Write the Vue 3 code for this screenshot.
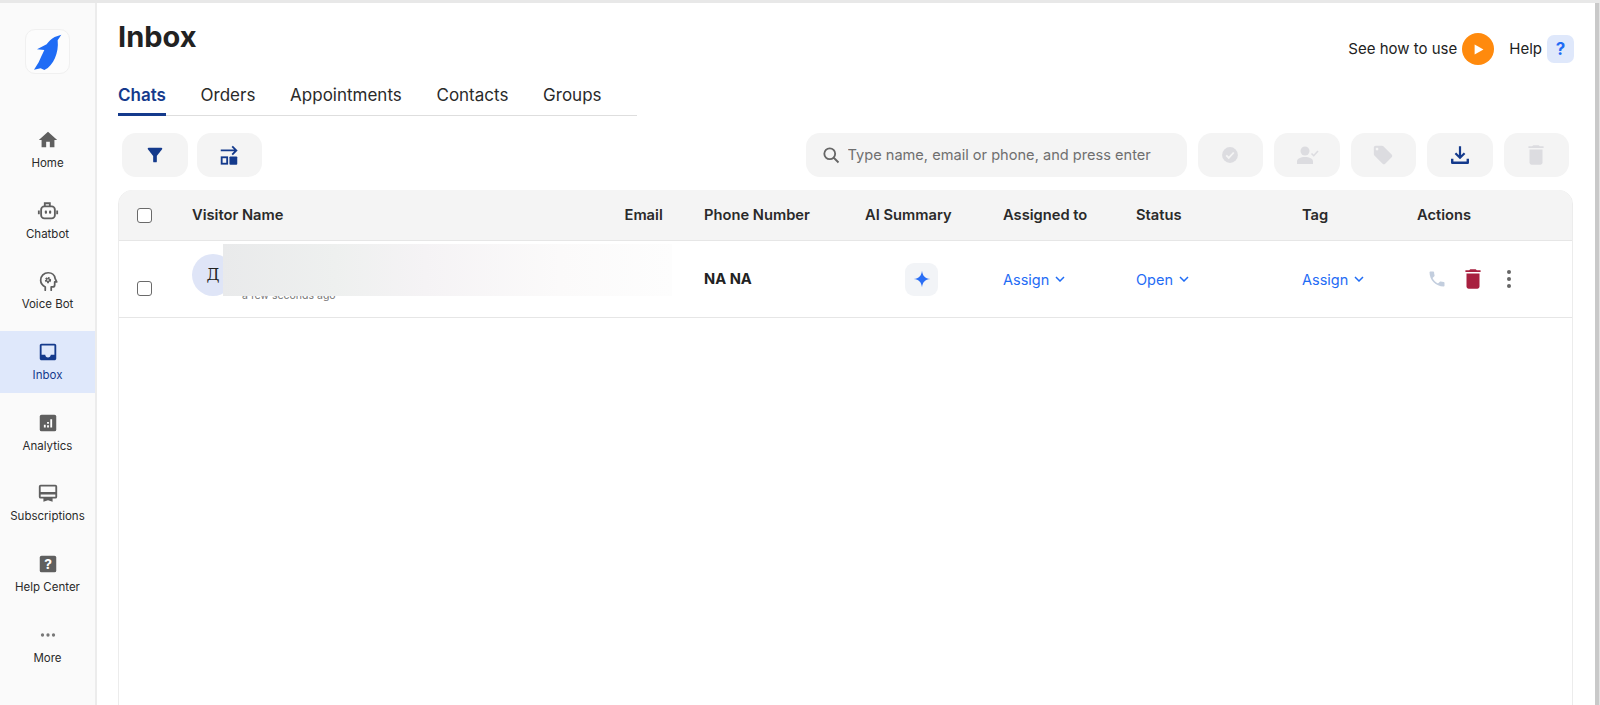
<script setup>
const navItems = [
  { label: 'Home', svg: '<path fill="#5f5f5f" d="M10 20v-6h4v6h5v-8h3L12 3 2 12h3v8z"/>' },
  { label: 'Chatbot', svg: '<g fill="none" stroke="#5f5f5f" stroke-width="2"><rect x="4.500" y="7" width="15" height="13" rx="3.500"/><path d="M8.500 7V3.500h5.500V7"/><path d="M2 11.500v4M22 11.500v4"/></g><rect x="8.500" y="11.500" width="2.400" height="3.400" rx="1" fill="#5f5f5f"/><rect x="13.100" y="11.500" width="2.400" height="3.400" rx="1" fill="#5f5f5f"/>' },
  { label: 'Voice Bot', svg: '<path fill="none" stroke="#5f5f5f" stroke-width="1.900" stroke-linecap="round" stroke-linejoin="round" d="M9 22v-3.400C6 17 4 14.400 4 11.300 4 6.700 7.600 3 12.200 3c4 0 7 2.600 7.600 6.300l1.700 3.700h-2.200v3.300c0 1.200-1 2.200-2.200 2.200H15.500V22"/><circle cx="12" cy="11" r="2.200" fill="none" stroke="#5f5f5f" stroke-width="2.400" stroke-dasharray="1.600 .7"/><circle cx="12" cy="11" r="1.700" fill="none" stroke="#5f5f5f" stroke-width="1.200"/>' },
  { label: 'Inbox', active: true, svg: '<path fill="#143a8c" d="M19 3H5c-1.100 0-2 .9-2 2v14c0 1.100.9 2 2 2h14c1.100 0 2-.9 2-2V5c0-1.100-.9-2-2-2zm0 12h-4c0 1.660-1.350 3-3 3s-3-1.340-3-3H5V5h14v10z"/>' },
  { label: 'Analytics', svg: '<rect x="3" y="3" width="18" height="18" rx="2" fill="#5f5f5f"/><path fill="#fff" d="M7.500 14h2v3h-2zM11 11h2v1.800h-2zM11 14.500h2V17h-2zM14.500 8h2v9h-2z"/>' },
  { label: 'Subscriptions', svg: '<path fill="#5f5f5f" d="M4 3h16a2 2 0 0 1 2 2v11a2 2 0 0 1-2 2h-3v3.500l-5-1.500-5 1.500V18H4a2 2 0 0 1-2-2V5a2 2 0 0 1 2-2zm0 2v6h16V5H4zm0 8.500V16h16v-2.500H4z"/>' },
  { label: 'Help Center', svg: '<rect x="3" y="3" width="18" height="18" rx="2" fill="#5f5f5f"/><text x="12" y="17.500" text-anchor="middle" font-size="15" font-weight="700" font-family="Inter, sans-serif" fill="#fff">?</text>' },
  { label: 'More', svg: '<g fill="#777"><circle cx="6" cy="12" r="1.800"/><circle cx="12" cy="12" r="1.800"/><circle cx="18" cy="12" r="1.800"/></g>' }
]

const tabs = ['Chats', 'Orders', 'Appointments', 'Contacts', 'Groups']
const columns = ['Visitor Name', 'Email', 'Phone Number', 'AI Summary', 'Assigned to', 'Status', 'Tag', 'Actions']
</script>

<template>
  <div class="app">
    <aside class="sidebar">
      <div class="logo">
        <svg viewBox="0 0 132 132" width="44" height="44">
          <path fill="#1f6cf5" d="M106 14 L86 21 C76 26 68 34 62 43 L33 58 L55 60 C48 74 43 86 38 97 L24 119 L44 115 L55 120 C70 113 80 100 87 84 C94 68 97 50 95 31 Z" />
        </svg>
      </div>
      <nav class="nav">
        <a v-for="item in navItems" :key="item.label" class="nav-item" :class="{ active: item.active }">
          <svg viewBox="0 0 24 24" width="22" height="22" v-html="item.svg"></svg>
          <span>{{ item.label }}</span>
        </a>
      </nav>
    </aside>

    <main class="main">
      <header class="page-head">
        <h1>Inbox</h1>
        <div class="head-links">
          <span class="head-text">See how to use</span>
          <span class="play">
            <svg viewBox="0 0 10 10" width="11" height="11"><path fill="#fff" d="M1.500 .5 9.500 5l-8 4.500z" /></svg>
          </span>
          <span class="head-text help-label">Help</span>
          <span class="help-box">?</span>
        </div>
      </header>

      <div class="tabs">
        <span v-for="(tab, i) in tabs" :key="tab" class="tab" :class="{ active: i === 0 }">{{ tab }}</span>
      </div>

      <div class="toolbar">
        <div class="tool-group left">
          <button class="tool-btn">
            <svg viewBox="0 0 24 24" width="22" height="22"><path fill="#143a8c" d="M4.250 5.610C6.270 8.200 10 13 10 13v6c0 .55.45 1 1 1h2c.55 0 1-.45 1-1v-6s3.720-4.800 5.740-7.390C20.250 4.950 19.780 4 18.950 4H5.040c-.83 0-1.300.95-.79 1.610z" /></svg>
          </button>
          <button class="tool-btn">
            <svg viewBox="0 0 24 24" width="22" height="22">
              <path fill="none" stroke="#143a8c" stroke-width="2" d="M3 7h16M15.500 2.500 20 7l-4.500 4.500" />
              <rect x="4" y="14.500" width="6" height="7" fill="none" stroke="#143a8c" stroke-width="2" />
              <rect x="12.500" y="13.500" width="8.500" height="9" rx="1" fill="#143a8c" />
            </svg>
          </button>
        </div>

        <div class="tool-group">
          <label class="search">
            <svg viewBox="0 0 24 24" width="20" height="20"><path fill="none" stroke="#666" stroke-width="2.200" d="M10.500 4a6.500 6.500 0 1 0 0 13 6.500 6.500 0 0 0 0-13zM15.300 15.300 21 21" /></svg>
            <input type="text" placeholder="Type name, email or phone, and press enter" />
          </label>

          <button class="tool-btn">
            <svg viewBox="0 0 24 24" width="20" height="20"><circle cx="12" cy="12" r="9.500" fill="#dcdce0" /><path fill="none" stroke="#f4f4f4" stroke-width="2.200" d="m7.500 12.500 3 3 6-6.500" /></svg>
          </button>
          <button class="tool-btn">
            <svg viewBox="0 0 24 24" width="24" height="24"><g fill="#dcdce0"><circle cx="10" cy="8" r="4.500" /><path d="M2 21v-2.500c0-3 3.500-4.500 8-4.500s8 1.500 8 4.500V21z" /></g><path fill="none" stroke="#dcdce0" stroke-width="1.600" d="m16.500 10.500 2.200 2.200 4.300-4.700" /></svg>
          </button>
          <button class="tool-btn">
            <svg viewBox="0 0 24 24" width="22" height="22"><path fill="#dcdce0" d="M21.410 11.580l-9-9C12.050 2.220 11.550 2 11 2H4c-1.100 0-2 .9-2 2v7c0 .55.22 1.050.59 1.420l9 9c.36.36.86.58 1.410.58.55 0 1.050-.22 1.410-.59l7-7c.37-.36.59-.86.59-1.410 0-.55-.23-1.060-.59-1.420zM5.500 7C4.670 7 4 6.330 4 5.500S4.670 4 5.500 4 7 4.670 7 5.500 6.330 7 5.500 7z" /></svg>
          </button>
          <button class="tool-btn">
            <svg viewBox="0 0 24 24" width="22" height="22"><path fill="none" stroke="#143a8c" stroke-width="2.400" d="M12 2.500v12M7 10l5 5 5-5" /><path fill="none" stroke="#143a8c" stroke-width="2.600" stroke-linejoin="round" d="M3.500 16v4.500h17V16" /></svg>
          </button>
          <button class="tool-btn">
            <svg viewBox="0 0 24 24" width="26" height="26"><path fill="#dcdce0" d="M6 19c0 1.100.9 2 2 2h8c1.100 0 2-.9 2-2V7H6v12zM19 4h-3.500l-1-1h-5l-1 1H5v1.500h14V4z" /></svg>
          </button>
        </div>
      </div>

      <section class="table">
        <div class="cols table-head">
          <span class="check"></span>
          <span v-for="col in columns" :key="col">{{ col }}</span>
        </div>
        <div class="cols table-row">
          <span class="check row-check"></span>
          <div class="visitor">
            <span class="avatar">Д</span>
            <span class="time">a few seconds ago</span>
          </div>
          <span></span>
          <span class="phone">NA NA</span>
          <span class="ai-btn">
            <svg viewBox="0 0 24 24" width="18" height="18"><path fill="#2a6ef5" d="M12 1c.8 6.800 4 10.200 11 11-7 .8-10.200 4.200-11 11-.8-6.800-4-10.200-11-11 7-.8 10.200-4.200 11-11z" /></svg>
          </span>
          <a class="link">Assign <svg class="chev" viewBox="0 0 10 6"><path d="M1 1l4 4 4-4" /></svg></a>
          <a class="link">Open <svg class="chev" viewBox="0 0 10 6"><path d="M1 1l4 4 4-4" /></svg></a>
          <a class="link">Assign <svg class="chev" viewBox="0 0 10 6"><path d="M1 1l4 4 4-4" /></svg></a>
          <div class="actions">
            <svg viewBox="0 0 24 24" width="20" height="20"><path fill="#c3cede" d="M6.620 10.790c1.440 2.830 3.760 5.140 6.590 6.590l2.200-2.200c.27-.27.67-.36 1.020-.24 1.120.37 2.330.57 3.570.57.55 0 1 .45 1 1V20c0 .55-.45 1-1 1-9.390 0-17-7.610-17-17 0-.55.45-1 1-1h3.500c.55 0 1 .45 1 1 0 1.250.2 2.450.57 3.570.11.35.03.74-.25 1.020l-2.200 2.200z" /></svg>
            <svg class="trash" viewBox="0 0 24 24" width="26" height="26"><path fill="#a8203f" d="M6 19c0 1.100.9 2 2 2h8c1.100 0 2-.9 2-2V7H6v12zM19 4h-3.500l-1-1h-5l-1 1H5v1.500h14V4z" /></svg>
            <svg class="kebab" viewBox="0 0 6 20" width="6" height="20"><g fill="#666"><circle cx="3" cy="3" r="2" /><circle cx="3" cy="10" r="2" /><circle cx="3" cy="17" r="2" /></g></svg>
          </div>
          <div class="blur-mask"></div>
        </div>
      </section>
    </main>

    <div class="scrollbar"></div>
  </div>
</template>

<style>
html, body {
  margin: 0;
  background: #fff;
  overflow: hidden;
}
</style>

<style scoped>
.app {
  display: flex;
  height: 705px;
  box-sizing: border-box;
  border-top: 3px solid #e8e8e8;
  font-family: Inter, "Liberation Sans", sans-serif;
  color: #222;
  overflow: hidden;
}

.sidebar {
  flex: 0 0 95px;
  background: #fafafa;
  border-right: 2px solid #ececec;
  padding-top: 26px;
}

.logo {
  width: 45px;
  height: 45px;
  margin: 0 0 45px 25px;
  border: 1px solid #f0f0f0;
  border-radius: 10px;
  background: #fcfcfc;
  box-sizing: border-box;
  display: flex;
  align-items: center;
  justify-content: center;
}

.logo svg {
  flex: none;
}

.nav {
  display: flex;
  flex-direction: column;
  gap: 8.700px;
}

.nav-item {
  height: 62px;
  padding-top: 10px;
  box-sizing: border-box;
  display: flex;
  flex-direction: column;
  align-items: center;
  gap: 4px;
  font-size: 11.500px;
  line-height: 16px;
  color: #2a2a2a;
}

.nav-item.active {
  background: #dfe8fb;
  color: #143a8c;
}

.main {
  flex: 1;
  min-width: 0;
  padding: 14px 22px 0 21px;
}

.page-head {
  display: flex;
  justify-content: space-between;
  margin-right: -1px;
}

h1 {
  margin: 0;
  font-size: 29px;
  line-height: 40px;
  font-weight: 700;
  color: #222;
}

.head-links {
  display: flex;
  align-items: center;
  height: 32px;
  margin-top: 16px;
  font-size: 15px;
}

.head-text {
  margin-bottom: 2px;
}

.play {
  width: 32px;
  height: 32px;
  margin-left: 5px;
  border-radius: 50%;
  background: #ff8a0d;
  display: flex;
  align-items: center;
  justify-content: center;
}

.help-label {
  margin-left: 15px;
}

.help-box {
  width: 27px;
  height: 28px;
  margin-left: 5px;
  border-radius: 7px;
  background: #dfe8fb;
  color: #1f6cf5;
  font-size: 17px;
  font-weight: 700;
  text-align: center;
  line-height: 28px;
}

.tabs {
  display: flex;
  gap: 34.700px;
  width: 519px;
  height: 39px;
  margin-top: 12px;
  border-bottom: 1px solid #dedede;
  box-sizing: border-box;
}

.tab {
  height: 39px;
  box-sizing: border-box;
  font-size: 17px;
  line-height: 36px;
  color: #2a2a2a;
}

.tab.active {
  color: #143a8c;
  font-weight: 600;
  border-bottom: 3px solid #143a8c;
}

.toolbar {
  display: flex;
  justify-content: space-between;
  margin-top: 17px;
  padding: 0 4px;
}

.tool-group {
  display: flex;
  gap: 11px;
}

.tool-group.left {
  gap: 9px;
}

.tool-btn {
  flex: 0 0 65.500px;
  height: 44px;
  padding: 0;
  border: none;
  border-radius: 14px;
  background: #f4f4f4;
  display: flex;
  align-items: center;
  justify-content: center;
}

.search {
  flex: 0 0 381px;
  height: 44px;
  padding-left: 15px;
  box-sizing: border-box;
  border-radius: 14px;
  background: #f4f4f4;
  display: flex;
  align-items: center;
  gap: 7px;
}

.search input {
  flex: 1;
  min-width: 0;
  border: none;
  outline: none;
  background: none;
  padding: 0;
  font: 14.600px Inter, "Liberation Sans", sans-serif;
}

.search input::placeholder {
  color: #6f6f6f;
  opacity: 1;
}

.table {
  height: 600px;
  margin-top: 13px;
  border: 1px solid #ececec;
  border-radius: 14px 14px 0 0;
  box-sizing: border-box;
}

.cols {
  display: grid;
  grid-template-columns: 55px 432.500px 79.500px 161px 138px 133px 166px 115px 1fr;
  align-items: center;
  padding-left: 18px;
  border-bottom: 1px solid #e6e6e6;
  box-sizing: border-box;
}

.table-head {
  margin-top: -1px;
  height: 51px;
  background: #f4f4f4;
  border-radius: 14px 14px 0 0;
  font-size: 14.700px;
  font-weight: 600;
  color: #2a2a2a;
}

.table-row {
  position: relative;
  height: 77px;
}

.check {
  width: 15px;
  height: 15px;
  box-sizing: border-box;
  border: 1px solid #6a6a6a;
  border-radius: 3px;
  background: #fff;
}

.row-check {
  margin-top: 19px;
}

.visitor {
  display: flex;
  align-items: flex-start;
  gap: 8px;
  align-self: start;
  padding-top: 13px;
}

.avatar {
  flex: none;
  width: 42px;
  height: 42px;
  border-radius: 50%;
  background: #dfe5f7;
  font: 16px/42px "DejaVu Serif", serif;
  text-align: center;
  color: #222;
}

.time {
  margin-top: 34px;
  font-size: 10.500px;
  line-height: 16px;
  color: #777;
  white-space: nowrap;
}

.blur-mask {
  position: absolute;
  left: 104px;
  top: 3px;
  width: 449px;
  height: 52px;
  background: linear-gradient(90deg, #e9eaeb 0%, #eef0ef 25%, #f5f3f5 45%, #fbfafa 75%, #fdfdfd 100%);
}

.phone {
  font-size: 14.700px;
  font-weight: 700;
}

.ai-btn {
  width: 33px;
  height: 33px;
  margin-left: 40px;
  border-radius: 9px;
  background: #f2f4f7;
  display: flex;
  align-items: center;
  justify-content: center;
}

.link {
  display: flex;
  align-items: center;
  gap: 6px;
  font-size: 14.500px;
  color: #1f6cf5;
}

.chev {
  width: 10px;
  height: 6px;
  fill: none;
  stroke: #1f6cf5;
  stroke-width: 1.500;
}

.actions {
  display: flex;
  align-items: center;
  margin-left: 10px;
}

.trash {
  margin-left: 13px;
}

.kebab {
  margin-left: 20px;
}

.scrollbar {
  flex: 0 0 5px;
  background: #c9c9c9;
  border-right: 1px solid #e2e2e2;
  box-sizing: border-box;
}
</style>
